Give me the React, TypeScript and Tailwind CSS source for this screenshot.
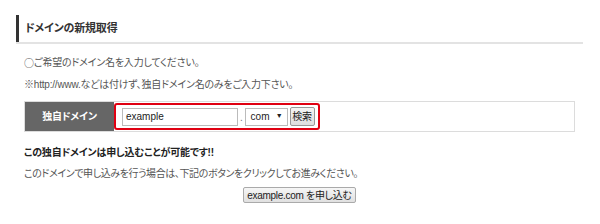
import React from 'react'

const font = "font-['Liberation_Sans','Noto_Sans_CJK_JP',sans-serif] [font-feature-settings:'palt']"

export default function App() {
  return (
    <div className={`w-[600px] h-[224px] bg-white text-[#333] ${font}`}>
      <div className="pl-4 pt-[15px]">
        <div className="w-[567px] border-b-2 border-[#e3e3e3]">
          <div className="flex h-[27px] items-center border-l-[3px] border-[#333] pl-[6px] text-[11px] font-bold tracking-[-0.2px]">
            ドメインの新規取得
          </div>
        </div>

        <div className="pl-2 text-[10px] tracking-[-0.2px]">
          <p className="mt-[10px] flex h-[16px] items-center text-[#555]">
            <span className="font-['Noto_Sans_CJK_JP',sans-serif] [font-feature-settings:normal]">○</span>
            <span>ご希望のドメイン名を入力してください。</span>
          </p>
          <p className="mt-[7px] leading-[16px] text-[#555]">
            ※http://www.などは付けず、独自ドメイン名のみをご入力下さい。
          </p>

          <div className="mt-[8px] flex h-[31px] w-[551px] border border-[#dcdcdc]">
            <div className="flex w-[89px] items-center justify-center bg-[#666] font-bold text-white">
              独自ドメイン
            </div>
            <div className="flex items-center">
              <div className="flex h-[27px] items-center rounded-[3px] border-2 border-[#e00012] pl-[6px] pr-[3px]">
                <div className="flex h-[18px] w-[116px] items-center border border-[#bbb] bg-white px-[3px] text-[#222] tracking-normal">
                  example
                </div>
                <span className="ml-[2px] self-end pb-[3px] text-[#777]">.</span>
                <div className="ml-[2px] flex h-[18px] w-[43px] items-center justify-between border border-[#bbb] bg-white pl-[5px] pr-[4px] text-[#222] tracking-normal">
                  <span>com</span>
                  <span className="text-[7px]">▼</span>
                </div>
                <div className="ml-[2px] flex h-[19px] w-[25px] items-center justify-center rounded-[2px] border border-[#999] bg-gradient-to-b from-[#f4f4f4] to-[#dedede] text-[#222]">
                  検索
                </div>
              </div>
            </div>
          </div>

          <p className="mt-[13px] font-bold leading-[16px] text-[#222]">
            この独自ドメインは申し込むことが可能です!!
          </p>
          <p className="mt-[5px] leading-[16px] text-[#555] tracking-[-0.4px]">
            このドメインで申し込みを行う場合は、下記のボタンをクリックしてお進みください。
          </p>
        </div>

        <div className="mt-[5px] flex w-[567px] justify-center">
          <div className="flex h-[16px] items-center rounded-[2px] border border-[#aaa] bg-gradient-to-b from-[#f6f6f6] to-[#e0e0e0] px-[3px] text-[10px] tracking-[-0.3px] text-[#222]">
            example.com を申し込む
          </div>
        </div>
      </div>
    </div>
  )
}
